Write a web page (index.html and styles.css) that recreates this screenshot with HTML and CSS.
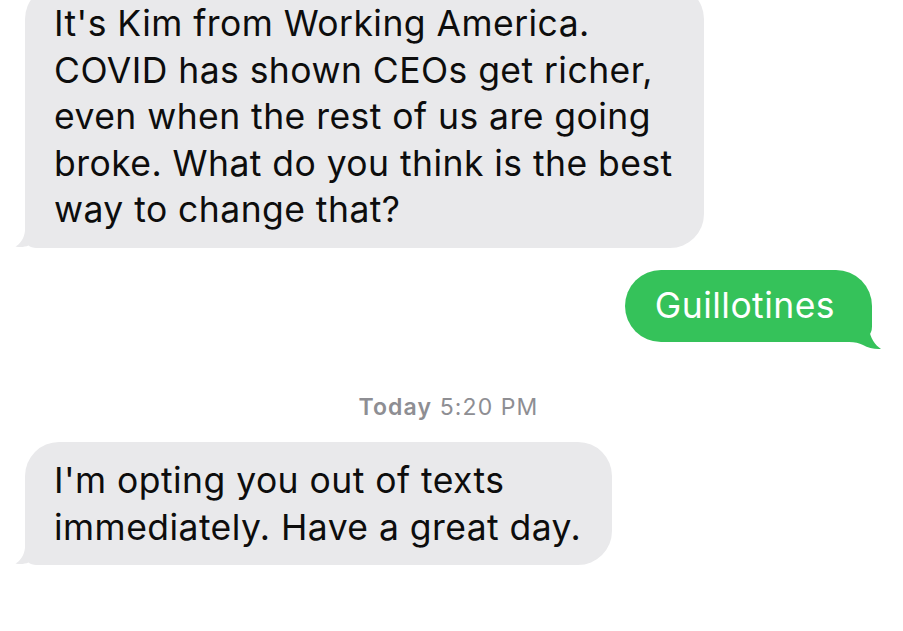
FILE: index.html
```html
<!doctype html>
<html lang="en">
<head>
    <meta charset="UTF-8">
    <title>Messages</title>
    <link rel="stylesheet" href="styles.css">
</head>
<body>
    <div class="thread">
        <div class="bubble received first">
            It's Kim from Working America.<br>
            COVID has shown CEOs get richer,<br>
            even when the rest of us are going<br>
            broke. What do you think is the best<br>
            way to change that?
            <svg class="tail" viewBox="0 0 30 30"><path d="M10 0 L30 0 L30 30 L22 30 C18 30 15 29 13.5 27.5 C10 29 5 29.5 0.5 28.5 C5 26 9 21 10 13 Z"/></svg>
        </div>

        <div class="bubble sent">
            Guillotines
            <svg class="tail" viewBox="0 0 36 36"><path d="M20 0 L0 0 L0 28 C6 28 10 29 14 31 C19 34 26 35.5 32 35 C26 31 21 24 20 14 Z"/></svg>
        </div>

        <div class="stamp"><b>Today</b> 5:20 PM</div>

        <div class="bubble received">
            I'm opting you out of texts<br>
            immediately. Have a great day.
            <svg class="tail" viewBox="0 0 30 30"><path d="M10 0 L30 0 L30 30 L22 30 C18 30 15 29 13.5 27.5 C10 29 5 29.5 0.5 28.5 C5 26 9 21 10 13 Z"/></svg>
        </div>
    </div>
</body>
</html>
```

FILE: styles.css
```css
body {
    margin: 0;
    background: #fff;
    font-family: Inter, "Liberation Sans", Arial, sans-serif;
    overflow: hidden;
}
.thread {
    display: flex;
    flex-direction: column;
    padding: 0 31px 0 25px;
}
.bubble {
    position: relative;
    font-size: 35.5px;
    line-height: 46.5px;
    letter-spacing: 0.45px;
    border-radius: 34px;
    padding: 16px 31px 14px 29px;
}
.received {
    align-self: flex-start;
    background: #e9e9eb;
    color: #0d0d0d;
    border-bottom-left-radius: 14px;
}
.received .tail {
    position: absolute;
    left: -10px;
    bottom: 0;
    width: 30px;
    height: 30px;
    fill: #e9e9eb;
}
.first {
    margin-top: -15px;
}
.sent {
    align-self: flex-end;
    background: #35c25a;
    color: #fff;
    margin-top: 22px;
    padding: 13px 37px 13px 30px;
    border-radius: 37px;
    border-bottom-right-radius: 16px;
}
.sent .tail {
    position: absolute;
    right: -13px;
    bottom: -8px;
    width: 36px;
    height: 36px;
    fill: #35c25a;
}
.stamp {
    align-self: center;
    margin: 52px 0 22px;
    font-size: 23px;
    line-height: 26px;
    letter-spacing: 1.1px;
    color: #8e8e93;
}
.stamp b {
    font-weight: 600;
}
```
